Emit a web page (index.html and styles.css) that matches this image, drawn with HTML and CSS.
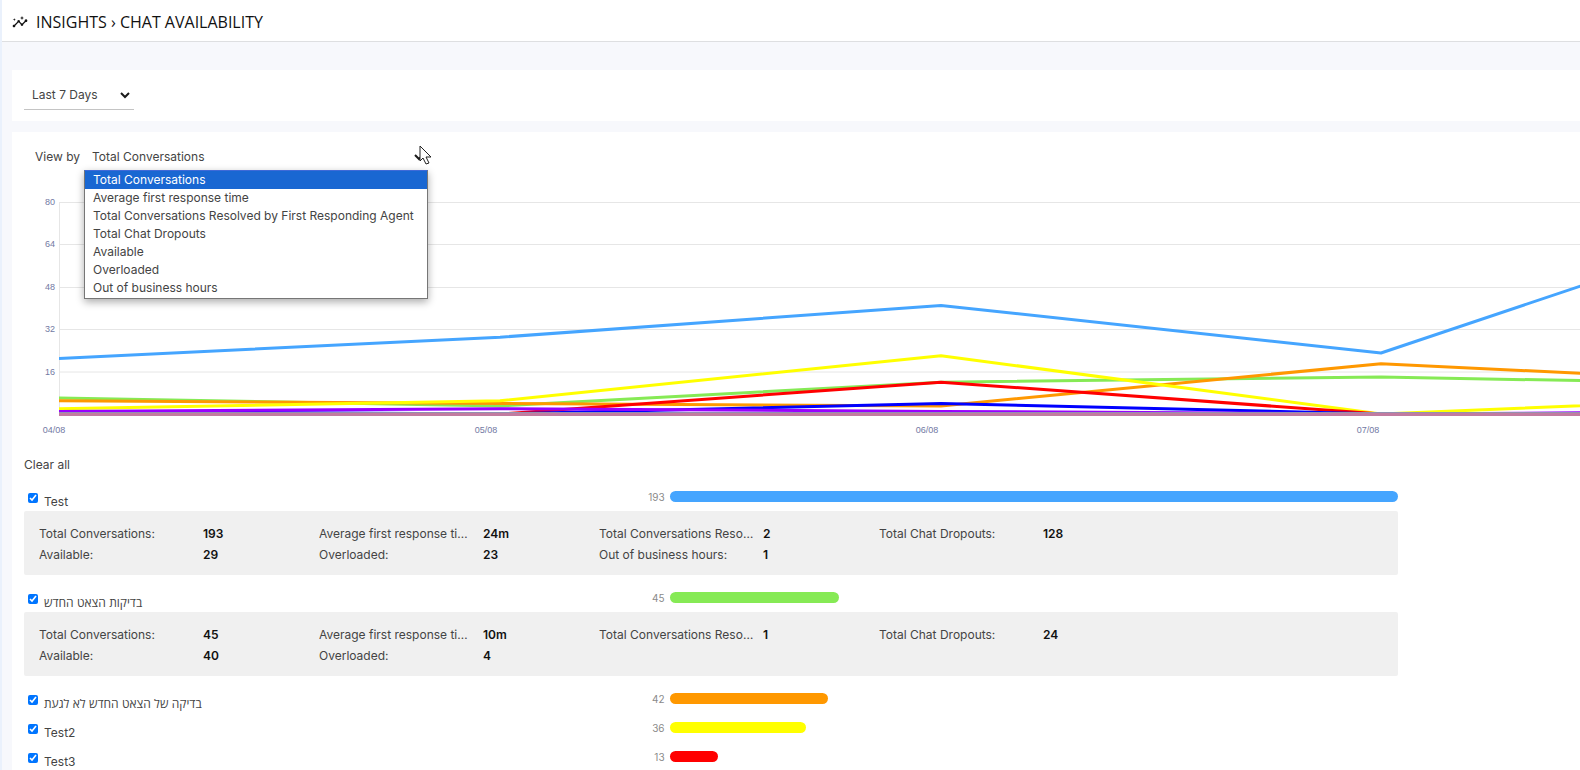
FILE: index.html
```html
<!DOCTYPE html>
<html lang="en">
<head>
<meta charset="utf-8">
<title>Insights › Chat Availability</title>
<link rel="stylesheet" href="styles.css">
</head>
<body>
<header class="page-header">
  <svg class="page-icon" viewBox="0 0 24 24" aria-hidden="true"><path d="M21 8c-1.45 0-2.26 1.44-1.93 2.51l-3.55 3.56c-.3-.09-.74-.09-1.04 0l-2.55-2.55C12.27 10.45 11.46 9 10 9c-1.45 0-2.27 1.44-1.93 2.52l-4.56 4.55C2.44 15.74 1 16.55 1 18c0 1.1.9 2 2 2 1.45 0 2.26-1.44 1.93-2.51l4.55-4.56c.3.09.74.09 1.04 0l2.55 2.55C12.73 16.55 13.54 18 15 18c1.45 0 2.27-1.44 1.93-2.52l3.56-3.55C21.56 12.26 23 11.45 23 10c0-1.1-.9-2-2-2z"/><path d="M15 9l.94-2.07L18 6l-2.06-.93L15 3l-.92 2.07L12 6l2.08.93zM3.5 11L4 9l2-.5L4 8l-.5-2L3 8l-2 .5L3 9z"/></svg>
  <h1 class="page-title">INSIGHTS › CHAT AVAILABILITY</h1>
</header>
<main class="content">
  <section class="card filter-card">
    <div class="select-box period">
      <select class="select" aria-label="Period"><option>Last 7 Days</option></select>
      <svg class="chevron" viewBox="0 0 10 7" aria-hidden="true"><path d="M1 1l4 4 4-4"/></svg>
    </div>
  </section>
  <section class="card report">
    <div class="view-by">
      <label for="metric">View by</label>
      <div class="select-box metric">
        <select class="select" id="metric"><option>Total Conversations</option></select>
        <svg class="chevron" viewBox="0 0 10 7" aria-hidden="true"><path d="M1 1l4 4 4-4"/></svg>
        <svg class="pointer" viewBox="0 0 13 20" aria-hidden="true"><path d="M1 1v15l3-3 3 6 3-1-3-6h5z"/></svg>
        <ul class="menu" role="listbox" aria-label="View by">
          <li class="option selected" role="option" aria-selected="true">Total Conversations</li>
          <li class="option" role="option">Average first response time</li>
          <li class="option" role="option">Total Conversations Resolved by First Responding Agent</li>
          <li class="option" role="option">Total Chat Dropouts</li>
          <li class="option" role="option">Available</li>
          <li class="option" role="option">Overloaded</li>
          <li class="option" role="option">Out of business hours</li>
        </ul>
      </div>
    </div>
    <div class="chart-scroll">
      <svg class="chart" width="2720" height="260" role="img" aria-label="Conversations per day">
        <defs><clipPath id="plot"><rect x="47" y="0" width="2660" height="234"/></clipPath></defs>
        <g class="grid"><path d="M47 20.500H2707M47 62.500H2707M47 105.500H2707M47 147.500H2707M47 190H2707M47.500 20V234"/></g>
        <g class="axis y-axis"><text x="43" y="23">80</text><text x="43" y="65">64</text><text x="43" y="108">48</text><text x="43" y="150">32</text><text x="43" y="193">16</text></g>
        <g class="axis x-axis"><text x="42" y="251">04/08</text><text x="474" y="251">05/08</text><text x="915" y="251">06/08</text><text x="1356" y="251">07/08</text></g>
        <g class="series" clip-path="url(#plot)">
          <path stroke="#45a5ff" d="M47 176.400L488 155.200L929 123.400L1369 171L1810 23"/>
          <path stroke="#86ea55" d="M47 216L488 224L929 200.200L1369 195L1810 203"/>
          <path stroke="#ff9800" d="M47 218.800L488 221.400L929 224L1369 181.700L1810 203"/>
          <path stroke="#ffff00" d="M47 226.700L488 218.800L929 173.700L1369 232L1810 213.500"/>
          <path stroke="#ff0000" d="M47 232L488 232L929 200.200L1369 232L1810 232"/>
          <path stroke="#0000ff" d="M47 229.400L488 232L929 221.400L1369 232L1810 232"/>
          <path stroke="#9900ff" d="M47 229.400L488 226.700L929 229.400L1369 232L1810 229.400"/>
          <path stroke="#9290b0" d="M47 231.500H2707"/>
          <path class="baseline" stroke="#c27ba0" d="M47 232.500H2707"/>
        </g>
      </svg>
    </div>
    <button class="clear" type="button">Clear all</button>
    <div class="groups">
      <div class="row"><label class="name"><input type="checkbox" checked><span>Test</span></label><span class="count">193</span><div class="track"><div class="bar" style="width:100%;background:#45a5ff"></div></div></div>
      <dl class="details">
        <div class="stat"><dt>Total Conversations:</dt><dd>193</dd></div>
        <div class="stat"><dt>Average first response time:</dt><dd>24m</dd></div>
        <div class="stat"><dt>Total Conversations Resolved by First Responding Agent:</dt><dd>2</dd></div>
        <div class="stat"><dt>Total Chat Dropouts:</dt><dd>128</dd></div>
        <div class="stat"><dt>Available:</dt><dd>29</dd></div>
        <div class="stat"><dt>Overloaded:</dt><dd>23</dd></div>
        <div class="stat"><dt>Out of business hours:</dt><dd>1</dd></div>
      </dl>
      <div class="row"><label class="name"><input type="checkbox" checked><span dir="rtl" lang="he">בדיקות הצאט החדש</span></label><span class="count">45</span><div class="track"><div class="bar" style="width:23.3%;background:#86ea55"></div></div></div>
      <dl class="details">
        <div class="stat"><dt>Total Conversations:</dt><dd>45</dd></div>
        <div class="stat"><dt>Average first response time:</dt><dd>10m</dd></div>
        <div class="stat"><dt>Total Conversations Resolved by First Responding Agent:</dt><dd>1</dd></div>
        <div class="stat"><dt>Total Chat Dropouts:</dt><dd>24</dd></div>
        <div class="stat"><dt>Available:</dt><dd>40</dd></div>
        <div class="stat"><dt>Overloaded:</dt><dd>4</dd></div>
      </dl>
      <div class="row"><label class="name"><input type="checkbox" checked><span dir="rtl" lang="he">בדיקה של הצאט החדש לא לגעת</span></label><span class="count">42</span><div class="track"><div class="bar" style="width:21.7%;background:#ff9800"></div></div></div>
      <div class="row"><label class="name"><input type="checkbox" checked><span>Test2</span></label><span class="count">36</span><div class="track"><div class="bar" style="width:18.7%;background:#ffff00"></div></div></div>
      <div class="row"><label class="name"><input type="checkbox" checked><span>Test3</span></label><span class="count">13</span><div class="track"><div class="bar" style="width:6.7%;background:#ff0000"></div></div></div>
    </div>
  </section>
</main>
</body>
</html>
```

FILE: styles.css
```css
* {
  box-sizing: border-box;
}

body {
  margin: 0;
  min-height: 100vh;
  border-left: 2px solid #eaf1fc;
  background: #f7f8fc;
  color: #444;
  font: 12px/18px Inter, "Open Sans", sans-serif;
  overflow-x: hidden;
}

.page-header {
  display: flex;
  align-items: center;
  gap: 8px;
  height: 42px;
  padding: 3px 10px 0;
  border-bottom: 1px solid #dedfe1;
  background: #fff;
}

.page-icon {
  width: 16px;
  height: 16px;
  fill: #111;
}

.page-title {
  margin: 0;
  color: #111;
  font-family: "Open Sans", Inter, sans-serif;
  font-size: 16px;
  font-weight: 400;
  line-height: 24px;
}

.content {
  display: flex;
  flex-direction: column;
  gap: 11px;
  padding: 28px 0 0 10px;
}

.card {
  background: #fff;
}

.filter-card {
  padding: 10px 12px 11px;
}

.select-box {
  position: relative;
}

.select {
  width: 100%;
  height: 100%;
  padding: 0 8px;
  border: 0;
  background: transparent;
  color: inherit;
  font: inherit;
  appearance: none;
}

.chevron {
  position: absolute;
  top: 12px;
  right: 4px;
  width: 10px;
  height: 7px;
  fill: none;
  stroke: #1a1a1a;
  stroke-width: 2;
}

.period {
  width: 110px;
  height: 30px;
  border-bottom: 1px solid #c4c4c4;
}

.view-by {
  display: flex;
  align-items: center;
  gap: 4px;
  padding: 10px 23px;
}

.metric {
  width: 344px;
  height: 30px;
}

.pointer {
  position: absolute;
  z-index: 2;
  top: 3px;
  right: -4px;
  width: 13px;
  height: 20px;
  fill: #fff;
  stroke: #222;
}

.menu {
  position: absolute;
  z-index: 1;
  top: 28px;
  left: 0;
  width: 100%;
  margin: 0;
  padding: 0 0 1px;
  border: 1px solid #767676;
  border-top-color: #3f6ad8;
  background: #fff;
  box-shadow: 0 3px 8px #0005;
  list-style: none;
}

.option {
  padding: 0 8px;
}

.selected {
  background: #1967d2;
  color: #fff;
}

.chart-scroll {
  overflow: hidden;
}

.chart {
  display: block;
}

.grid {
  fill: none;
  stroke: #e6e6e6;
}

.axis {
  fill: #7279a3;
  font: 9px "Liberation Sans", sans-serif;
}

.y-axis {
  text-anchor: end;
}

.x-axis {
  text-anchor: middle;
}

.series {
  fill: none;
  stroke-width: 3;
  stroke-linejoin: round;
}

.clear {
  display: block;
  margin: 14px 12px 8px;
  padding: 0;
  border: 0;
  background: none;
  color: inherit;
  font: inherit;
}

.groups {
  width: 87.6%;
  margin-left: 12px;
}

.row {
  display: grid;
  grid-template-columns: 1fr 40px 53%;
  height: 29px;
}

.name {
  display: flex;
  gap: 6px;
  padding: 9px 0 0 4px;
}

.name span {
  padding-top: 2px;
}

.name input {
  width: 10px;
  height: 10px;
  margin: 2px 0 0;
  accent-color: #0075ff;
}

.count {
  padding: 6px 5px 0 0;
  color: #8a8a8a;
  font-size: 10px;
  text-align: right;
}

.track {
  padding-top: 9px;
}

.bar {
  height: 11px;
  border-radius: 6px;
}

.details {
  display: grid;
  grid-template-columns: repeat(4, minmax(0, 280px));
  margin: 0 0 8px;
  padding: 12px 15px 10px;
  border-radius: 2px;
  background: #f0f0f0;
  line-height: 21px;
}

.stat {
  display: grid;
  grid-template-columns: 156px 1fr;
  column-gap: 8px;
}

.stat dt {
  overflow: hidden;
  text-overflow: ellipsis;
  white-space: nowrap;
}

.stat dd {
  margin: 0;
  color: #111;
  font-weight: 600;
}
```
